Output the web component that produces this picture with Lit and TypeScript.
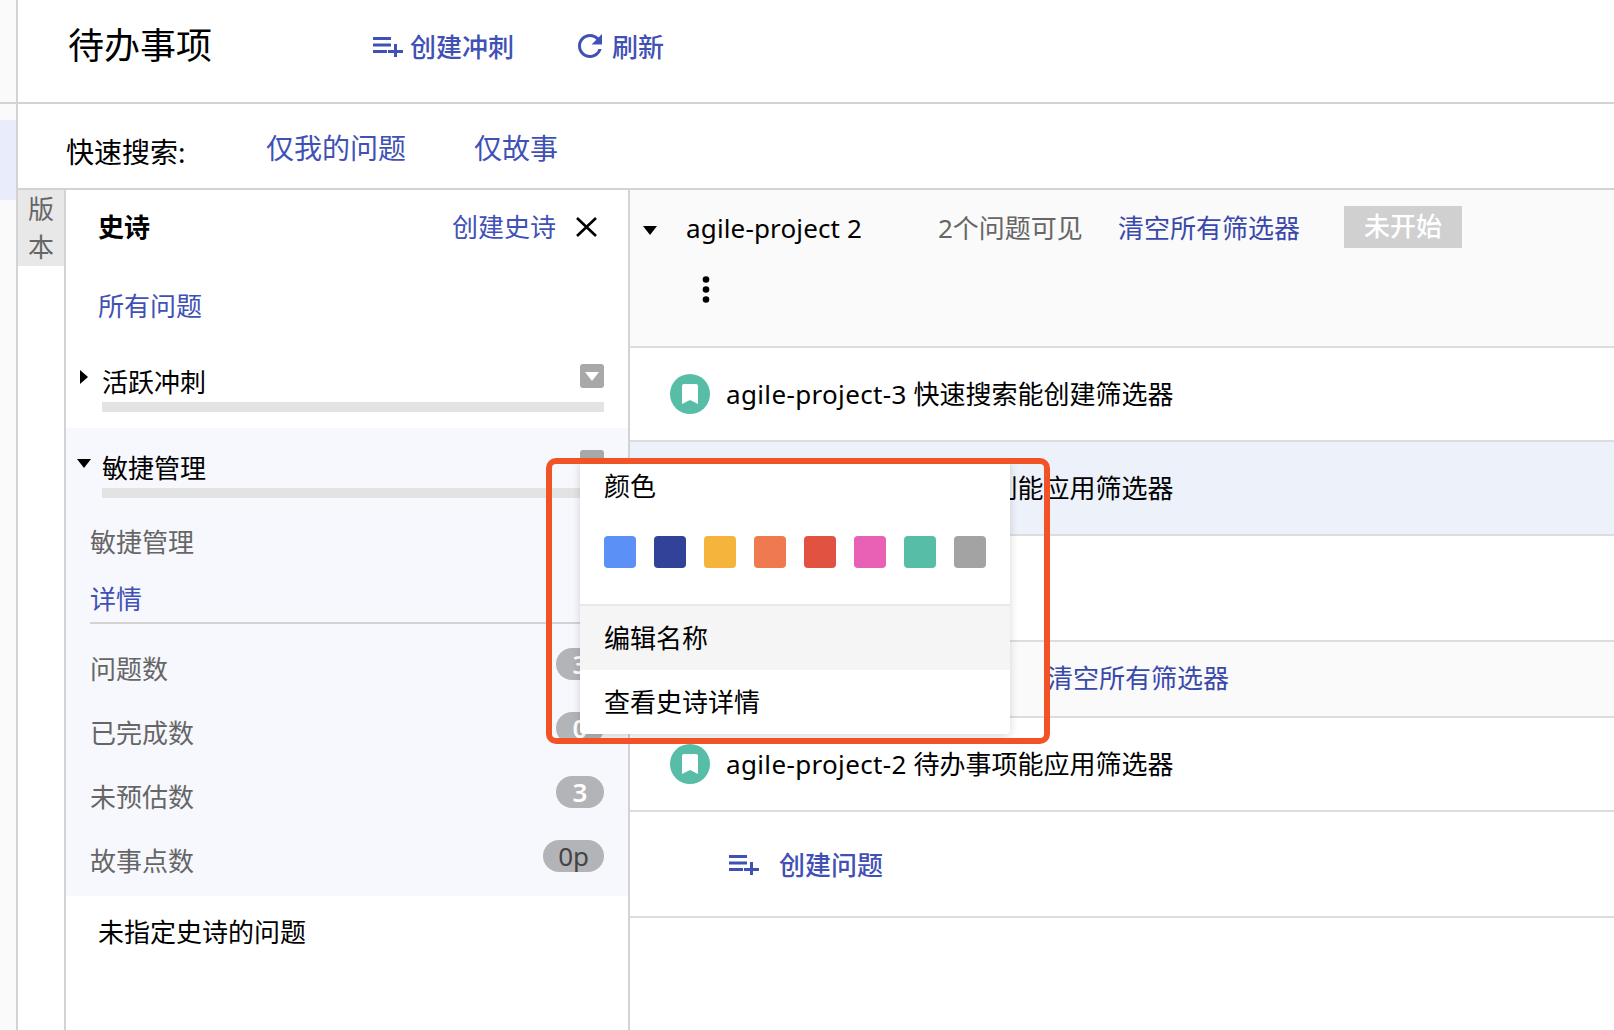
import { LitElement, html, css } from "lit";
import { customElement } from "lit/decorators.js";

const listPlus = html`<svg class="lp" viewBox="0 0 30 21" width="30" height="21" fill="#3f51b5"><rect x="0" y="1" width="18" height="3"/><rect x="0" y="7.5" width="18" height="3"/><rect x="0" y="14" width="14" height="3"/><rect x="15" y="14" width="15" height="3"/><rect x="21" y="8" width="3" height="13"/></svg>`;

const issueIcon = html`<span class="issue-icon"><svg viewBox="0 0 16 20" width="16" height="20" fill="#fff"><path d="M2 0h12a2 2 0 0 1 2 2v18l-8-4-8 4V2a2 2 0 0 1 2-2z"/></svg></span>`;

const caretDown = html`<svg class="cd" viewBox="0 0 14 9" width="14" height="9" fill="#000"><path d="M0 0h14L7 9z"/></svg>`;
const menuBtn = html`<span class="menu-btn"><svg viewBox="0 0 14 9" width="14" height="9" fill="#fff"><path d="M0 0h14L7 9z"/></svg></span>`;

const COLORS = ["#5b91f7", "#324299", "#f5b43c", "#f07a50", "#e25241", "#e961b4", "#57bda6", "#a3a3a3"];

@customElement("app-root")
export class AppRoot extends LitElement {
  static styles = css`
    :host {
      display: block;
      position: relative;
      width: 1614px;
      height: 1030px;
      overflow: hidden;
      background: #fff;
      color: #000;
      font-family: "Noto Sans", "Noto Sans CJK SC", sans-serif;
      font-size: 26px;
    }
    .shell { display: flex; height: 100%; }
    .rail { width: 16px; flex: none; background: #fafafa; border-right: 2px solid #d3d3d3; }
    .rail-top { height: 102px; border-bottom: 2px solid #d3d3d3; }
    .rail-mark { height: 80px; margin-top: 16px; background: #e8ecfb; }
    .main { flex: 1; display: flex; flex-direction: column; min-width: 0; }
    .link { color: #3f51b5; }
    .lat { letter-spacing: .35px; }
    .head { height: 102px; flex: none; display: flex; align-items: flex-start; padding-left: 50px; border-bottom: 2px solid #d3d3d3; }
    .title { font-size: 36px; line-height: 92px; width: 144px; }
    .act { display: flex; align-items: center; gap: 8px; height: 92px; color: #3f51b5; font-weight: 500; }
    .act.a1 { margin-left: 161px; gap: 7px; }
    .act.a2 { margin-left: 64px; gap: 10px; }
    .quick { height: 84px; flex: none; display: flex; align-items: flex-start; padding-left: 48px; border-bottom: 2px solid #d3d3d3; font-size: 28px; }
    .quick .lab { line-height: 40px; margin-top: 28px; width: 119px; white-space: nowrap; font-size: 28px; }
    .quick .link { line-height: 40px; margin-top: 24px; }
    .quick .q1 { margin-left: 81px; }
    .quick .q2 { margin-left: 68px; }
    .body { flex: 1; display: flex; min-height: 0; }
    .ver { width: 46px; flex: none; }
    .ver-tab { height: 76px; background: #e8e8e8; color: #666; text-align: center; line-height: 38px; padding: 0 10px; box-sizing: border-box; }
    .epics { width: 562px; flex: none; border-left: 2px solid #d3d3d3; border-right: 2px solid #d3d3d3; }
    .ep-head { height: 74px; display: flex; align-items: center; padding: 0 31px 0 32px; }
    .ep-head b { flex: 1; font-weight: 700; margin-top: -2px; }
    .ep-head .link { margin-top: -2px; }
    .ep-head svg { margin-left: 20px; }
    .all { height: 84px; line-height: 84px; padding-left: 32px; }
    .epic { display: flex; padding: 16px 24px 16px 0; }
    .active { background: #f7f8fd; padding-top: 22px; }
    .caret { width: 36px; flex: none; display: flex; justify-content: center; }
    .caret svg { margin-top: 6px; }
    .active .caret { justify-content: flex-start; padding-left: 11px; box-sizing: border-box; }
    .active .caret svg { margin-top: 9px; }
    .ep-main { flex: 1; }
    .ep-row { display: flex; justify-content: space-between; align-items: flex-start; height: 38px; line-height: 36px; }
    .bar { height: 10px; background: #e3e3e3; }
    .menu-btn { width: 24px; height: 24px; border-radius: 3px; background: #a8a8a8; display: flex; align-items: center; justify-content: center; }
    .details { background: #f7f8fd; padding: 10px 24px 4px; color: #666; }
    .active.epic { padding-bottom: 16px; }
    .d-name { line-height: 36px; }
    .d-link { line-height: 36px; margin-top: 21px; padding-bottom: 5px; border-bottom: 2px solid #d3d3d3; color: #3f51b5; }
    .stat { height: 64px; display: flex; justify-content: space-between; align-items: center; }
    .stats { margin-top: 12px; }
    .badge { height: 32px; min-width: 48px; box-sizing: border-box; padding: 0 14px; border-radius: 16px; background: #b3b4b7; color: #fff; text-align: center; line-height: 32px; font-weight: 600; margin-top: -8px; }
    .badge.dark { color: #444; font-weight: 400; padding: 0 15px; }
    .none { line-height: 36px; padding: 18px 0 0 32px; }
    .back { flex: 1; min-width: 0; }
    .sec { background: #fafafa; border-bottom: 2px solid #ddd; box-sizing: border-box; }
    .sec1 { height: 158px; padding: 16px 0 0 12px; }
    .sec-line { display: flex; align-items: flex-start; }
    .sec-line .cd { margin-top: 20px; width: 16px; flex: none; }
    .sec-name { margin-left: 28px; width: 252px; line-height: 44px; flex: none; letter-spacing: .15px; }
    .sec-count { color: #666; width: 143px; line-height: 44px; flex: none; white-space: nowrap; }
    .sec-clear { margin-left: 37px; color: #3949ab; line-height: 44px; width: 182px; flex: none; }
    .status { margin-left: 44px; width: 118px; height: 42px; line-height: 40px; text-align: center; background: #d0d0d0; color: #fff; font-weight: 500; }
    .dots { display: block; margin: 26px 0 0 60px; }
    .row { height: 94px; box-sizing: border-box; border-bottom: 2px solid #ddd; display: flex; align-items: center; gap: 16px; padding-left: 40px; white-space: nowrap; }
    .row > span:last-child { margin-top: -2px; }
    .row.sel { background: #edf1fa; }
    .row.blank { height: 106px; }
    .issue-icon { width: 40px; height: 40px; border-radius: 50%; background: #57bda6; display: flex; align-items: center; justify-content: center; flex: none; }
    .sec2 { height: 76px; padding: 0 0 4px 417px; display: flex; align-items: center; color: #3949ab; }
    .add { height: 106px; box-sizing: border-box; border-bottom: 2px solid #ddd; display: flex; align-items: center; gap: 20px; padding-left: 99px; color: #3f51b5; font-weight: 500; }
    .pop { position: absolute; left: 580px; top: 462px; width: 430px; height: 272px; background: #fff; border-radius: 0 0 4px 4px; box-shadow: 0 2px 8px rgba(0,0,0,.16); }
    .pop-t { height: 50px; line-height: 48px; padding-left: 24px; }
    .sw { display: flex; gap: 18px; padding: 24px 0 36px 24px; }
    .sw span { width: 32px; height: 32px; border-radius: 4px; }
    .pop-i { height: 64px; line-height: 64px; padding-left: 24px; }
    .pop-i.first { border-top: 2px solid #e8e8e8; background: #f5f5f5; }
    .frame { position: absolute; left: 546px; top: 458px; width: 504px; height: 286px; box-sizing: border-box; border: 6px solid #f15226; border-radius: 10px; pointer-events: none; }
  `;

  render() {
    return html`
      <div class="shell">
        <div class="rail"><div class="rail-top"></div><div class="rail-mark"></div></div>
        <div class="main">
          <div class="head">
            <div class="title">待办事项</div>
            <div class="act a1">${listPlus}<span>创建冲刺</span></div>
            <div class="act a2">
              <svg viewBox="4 4 16 16" width="24" height="24" fill="#3f51b5"><path d="M17.65 6.35C16.2 4.9 14.21 4 12 4c-4.42 0-7.99 3.58-7.99 8s3.57 8 7.99 8c3.73 0 6.84-2.55 7.73-6h-2.08c-.82 2.33-3.04 4-5.65 4-3.31 0-6-2.69-6-6s2.69-6 6-6c1.66 0 3.14.69 4.22 1.78L13 11h7V4l-2.35 2.35z"/></svg>
              <span>刷新</span>
            </div>
          </div>
          <div class="quick">
            <div class="lab">快速搜索:</div>
            <div class="link q1">仅我的问题</div>
            <div class="link q2">仅故事</div>
          </div>
          <div class="body">
            <div class="ver"><div class="ver-tab">版本</div></div>
            <div class="epics">
              <div class="ep-head">
                <b>史诗</b>
                <span class="link">创建史诗</span>
                <svg viewBox="0 0 21 20" width="21" height="20" stroke="#000" stroke-width="2.6" fill="none"><path d="M1 1l19 18M20 1L1 19"/></svg>
              </div>
              <div class="all link">所有问题</div>
              <div class="epic">
                <div class="caret"><svg viewBox="0 0 8 14" width="8" height="14" fill="#000"><path d="M0 0l8 7-8 7z"/></svg></div>
                <div class="ep-main">
                  <div class="ep-row"><span>活跃冲刺</span>${menuBtn}</div>
                  <div class="bar"></div>
                </div>
              </div>
              <div class="epic active">
                <div class="caret">${caretDown}</div>
                <div class="ep-main">
                  <div class="ep-row"><span>敏捷管理</span>${menuBtn}</div>
                  <div class="bar"></div>
                </div>
              </div>
              <div class="details">
                <div class="d-name">敏捷管理</div>
                <div class="d-link">详情</div>
                <div class="stats">
                  <div class="stat"><span>问题数</span><span class="badge">3</span></div>
                  <div class="stat"><span>已完成数</span><span class="badge">0</span></div>
                  <div class="stat"><span>未预估数</span><span class="badge">3</span></div>
                  <div class="stat"><span>故事点数</span><span class="badge dark">0p</span></div>
                </div>
              </div>
              <div class="none">未指定史诗的问题</div>
            </div>
            <div class="back">
              <div class="sec sec1">
                <div class="sec-line">
                  ${caretDown}
                  <span class="sec-name">agile-project 2</span>
                  <span class="sec-count">2个问题可见</span>
                  <span class="sec-clear">清空所有筛选器</span>
                  <span class="status">未开始</span>
                </div>
                <svg class="dots" viewBox="0 0 8 27" width="8" height="27" fill="#000"><circle cx="4" cy="3.5" r="3.3"/><circle cx="4" cy="13.5" r="3.3"/><circle cx="4" cy="23.5" r="3.3"/></svg>
              </div>
              <div class="row">${issueIcon}<span><span class="lat">agile-project-3</span> 快速搜索能创建筛选器</span></div>
              <div class="row sel">${issueIcon}<span><span class="lat">agile-project-1</span> 活跃冲刺能应用筛选器</span></div>
              <div class="row blank"></div>
              <div class="sec sec2">清空所有筛选器</div>
              <div class="row">${issueIcon}<span><span class="lat">agile-project-2</span> 待办事项能应用筛选器</span></div>
              <div class="add">${listPlus}<span>创建问题</span></div>
            </div>
          </div>
        </div>
      </div>
      <div class="pop">
        <div class="pop-t">颜色</div>
        <div class="sw">${COLORS.map((c) => html`<span style="background:${c}"></span>`)}</div>
        <div class="pop-i first">编辑名称</div>
        <div class="pop-i">查看史诗详情</div>
      </div>
      <div class="frame"></div>
    `;
  }
}
